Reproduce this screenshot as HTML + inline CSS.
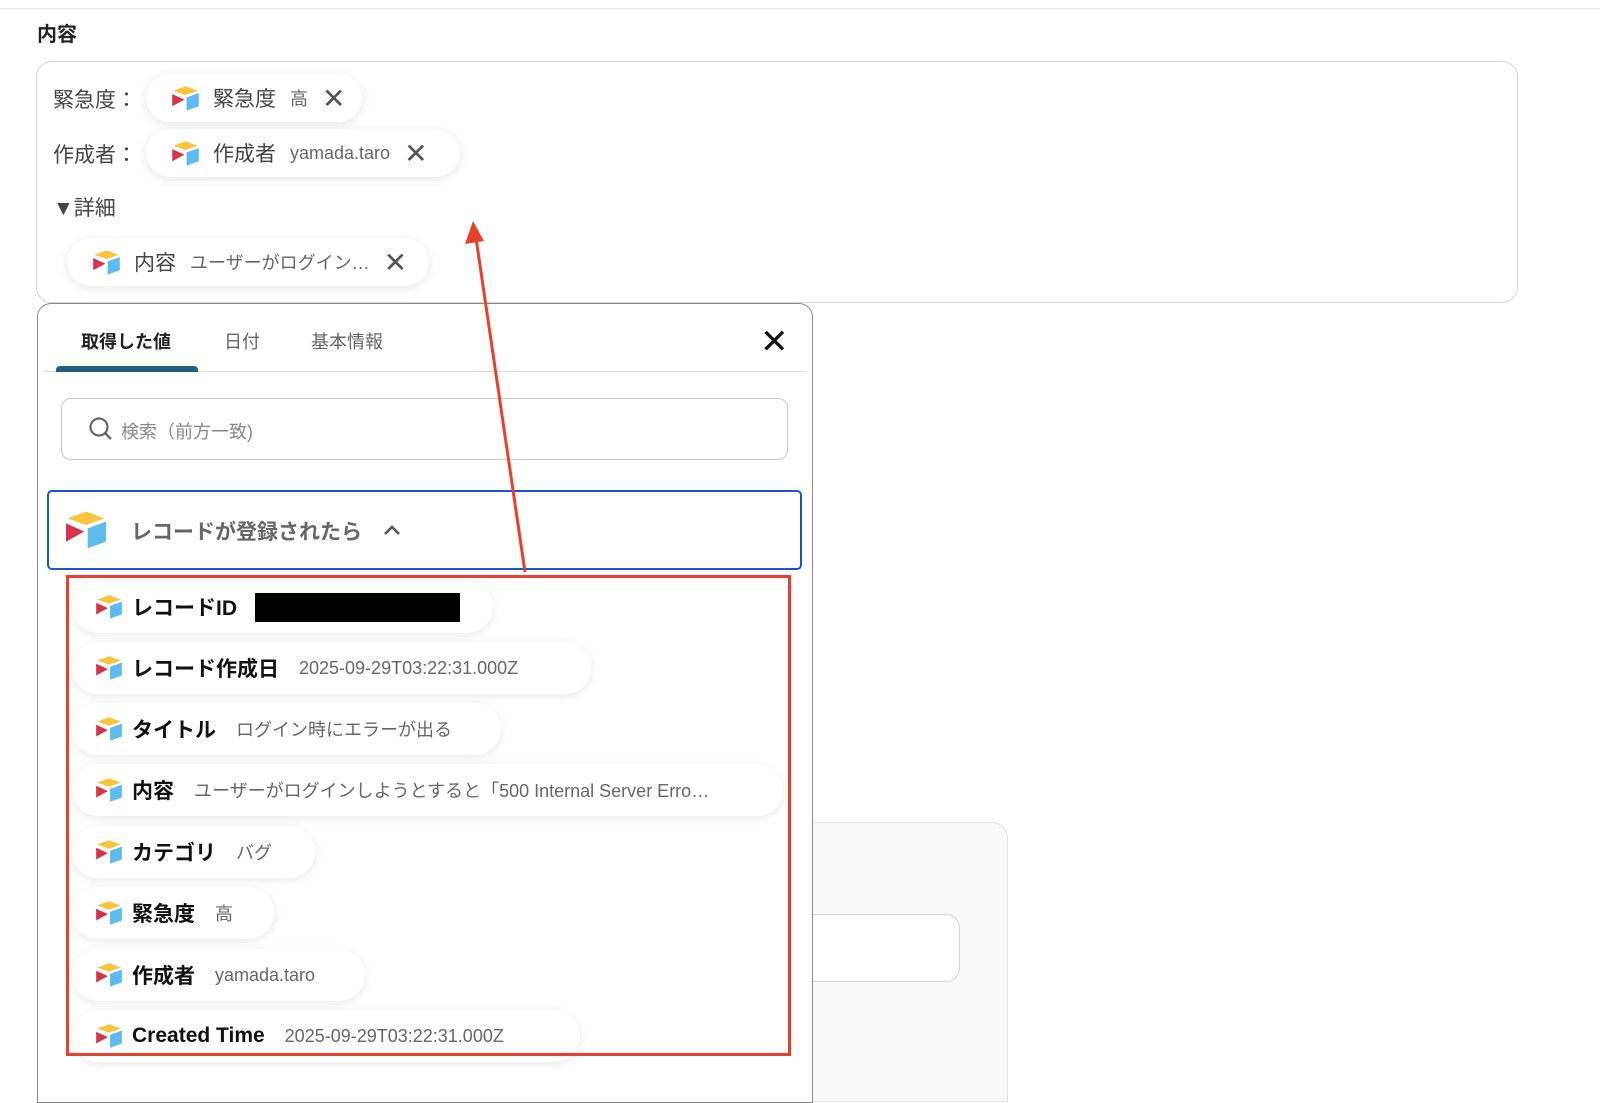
<!DOCTYPE html>
<html><head><meta charset="utf-8"><style>
*{box-sizing:border-box;margin:0;padding:0}
body{width:1600px;height:1083px;overflow:hidden;background:#fff;font-family:"Liberation Sans","Noto Sans CJK JP",sans-serif;position:relative;color:#333}
.abs{position:absolute}
.pill{position:absolute;height:48px;border-radius:24px;background:#fff;box-shadow:0 2px 10px rgba(0,0,0,0.10);display:flex;align-items:center;white-space:nowrap}
.pill svg{flex:none}
.lbl{font-size:21px;color:#444}
.val{font-size:18px;color:#666;margin-left:14px}
.x{font-size:28px;color:#555;margin-left:14px;font-weight:300}
.li{position:absolute;left:72px;height:52px;border-radius:26px;background:#fff;box-shadow:0 2px 10px rgba(0,0,0,0.09);display:flex;align-items:center;padding-left:22px;white-space:nowrap}
.li svg{flex:none}
.li b{font-size:21px;color:#111;font-weight:700;margin-left:8px}
.li span{font-size:18px;color:#666;margin-left:20px}
</style></head><body>
<svg width="0" height="0" style="position:absolute"><defs>
<g id="at"><path d="M3 5 L14 1 L25 5 L14 9 Z" fill="#f8c53a"/><path d="M15 11 L26 7 L26 19 L15 23 Z" fill="#5ebbee"/><path d="M2 8 L13 13 L2 19 Z" fill="#d8334a"/></g>
</defs></svg>
<div class="abs" style="left:0;top:8px;width:1600px;height:1px;background:#e3e3e3"></div>
<div class="abs" style="left:37px;top:18px;font-size:20px;font-weight:700;color:#222">内容</div>
<div class="abs" style="left:36px;top:61px;width:1482px;height:242px;border:1px solid #d3d6dc;border-radius:16px"></div>
<div class="abs lbl" style="left:53px;top:84px">緊急度：</div>
<div class="pill" style="left:146px;top:74px;width:216px;padding-left:24px"><svg width="31" height="27" viewBox="0 0 28 24"><use href="#at"/></svg><span class="lbl" style="margin-left:12px">緊急度</span><span class="val">高</span><span class="x">✕</span></div>
<div class="abs lbl" style="left:53px;top:139px">作成者：</div>
<div class="pill" style="left:146px;top:129px;width:314px;padding-left:24px"><svg width="31" height="27" viewBox="0 0 28 24"><use href="#at"/></svg><span class="lbl" style="margin-left:12px">作成者</span><span class="val">yamada.taro</span><span class="x">✕</span></div>
<div class="abs lbl" style="left:53px;top:192px">▼詳細</div>
<div class="pill" style="left:67px;top:238px;width:362px;padding-left:24px"><svg width="31" height="27" viewBox="0 0 28 24"><use href="#at"/></svg><span class="lbl" style="margin-left:12px">内容</span><span class="val">ユーザーがログイン…</span><span class="x">✕</span></div>

<div class="abs" style="left:812px;top:822px;width:196px;height:280px;background:#f9f9fa;border:1px solid #e3e4e8;border-radius:0 16px 0 0"></div>
<div class="abs" style="left:800px;top:914px;width:160px;height:68px;background:#fff;border:1px solid #d0d3da;border-radius:0 14px 14px 0"></div>

<div class="abs" style="left:37px;top:303px;width:776px;height:800px;background:#fff;border:1px solid #8a8a8a;border-radius:14px 14px 0 0"></div>
<div class="abs" style="left:81px;top:328px;font-size:18px;font-weight:700;color:#222">取得した値</div>
<div class="abs" style="left:224px;top:328px;font-size:18px;color:#666">日付</div>
<div class="abs" style="left:311px;top:328px;font-size:18px;color:#666">基本情報</div>
<div class="abs" style="left:760px;top:322px;font-size:34px;color:#111;font-weight:300">✕</div>
<div class="abs" style="left:43px;top:371px;width:763px;height:1px;background:#ddd"></div>
<div class="abs" style="left:56px;top:366px;width:142px;height:6px;background:#1f5f7f;border-radius:4px 4px 0 0"></div>
<div class="abs" style="left:61px;top:398px;width:727px;height:62px;border:1px solid #c9c9c9;border-radius:10px"></div>
<svg class="abs" style="left:88px;top:416px" width="26" height="26"><circle cx="11" cy="11" r="8.5" fill="none" stroke="#666" stroke-width="2.2"/><path d="M17 17 L23 23" stroke="#666" stroke-width="2.4"/></svg>
<div class="abs" style="left:121px;top:418px;font-size:18px;color:#888">検索（前方一致)</div>
<div class="abs" style="left:47px;top:490px;width:755px;height:80px;border:2px solid #1a56c8;border-radius:5px"></div>
<svg class="abs" style="left:62px;top:510px" width="48" height="40" viewBox="0 0 28 24"><use href="#at"/></svg>
<div class="abs" style="left:131px;top:516px;font-size:21px;color:#666;font-weight:700">レコードが登録されたら</div>
<svg class="abs" style="left:382px;top:522px" width="20" height="16"><path d="M3 12 L10 5 L17 12" fill="none" stroke="#555" stroke-width="2.6"/></svg>

<div class="li" style="top:581px;width:421px"><svg width="30" height="26" viewBox="0 0 28 24"><use href="#at"/></svg><b>レコードID</b><div style="margin-left:18px;width:205px;height:29px;background:#000"></div></div>
<div class="li" style="top:642px;width:519px"><svg width="30" height="26" viewBox="0 0 28 24"><use href="#at"/></svg><b>レコード作成日</b><span>2025-09-29T03:22:31.000Z</span></div>
<div class="li" style="top:703px;width:429px"><svg width="30" height="26" viewBox="0 0 28 24"><use href="#at"/></svg><b>タイトル</b><span>ログイン時にエラーが出る</span></div>
<div class="li" style="top:764px;width:711px"><svg width="30" height="26" viewBox="0 0 28 24"><use href="#at"/></svg><b>内容</b><span>ユーザーがログインしようとすると「500 Internal Server Erro…</span></div>
<div class="li" style="top:826px;width:243px"><svg width="30" height="26" viewBox="0 0 28 24"><use href="#at"/></svg><b>カテゴリ</b><span>バグ</span></div>
<div class="li" style="top:887px;width:202px"><svg width="30" height="26" viewBox="0 0 28 24"><use href="#at"/></svg><b>緊急度</b><span>高</span></div>
<div class="li" style="top:949px;width:293px"><svg width="30" height="26" viewBox="0 0 28 24"><use href="#at"/></svg><b>作成者</b><span>yamada.taro</span></div>
<div class="li" style="top:1010px;width:508px"><svg width="30" height="26" viewBox="0 0 28 24"><use href="#at"/></svg><b>Created Time</b><span>2025-09-29T03:22:31.000Z</span></div>

<div class="abs" style="left:66px;top:575px;width:725px;height:481px;border:3px solid #e8412a"></div>
<svg class="abs" style="left:0;top:0" width="1600" height="1083"><path d="M525 572 L476 238" stroke="#e8412a" stroke-width="3"/><path d="M473 221 L465 244 L484 241 Z" fill="#e8412a"/></svg>
</body></html>
